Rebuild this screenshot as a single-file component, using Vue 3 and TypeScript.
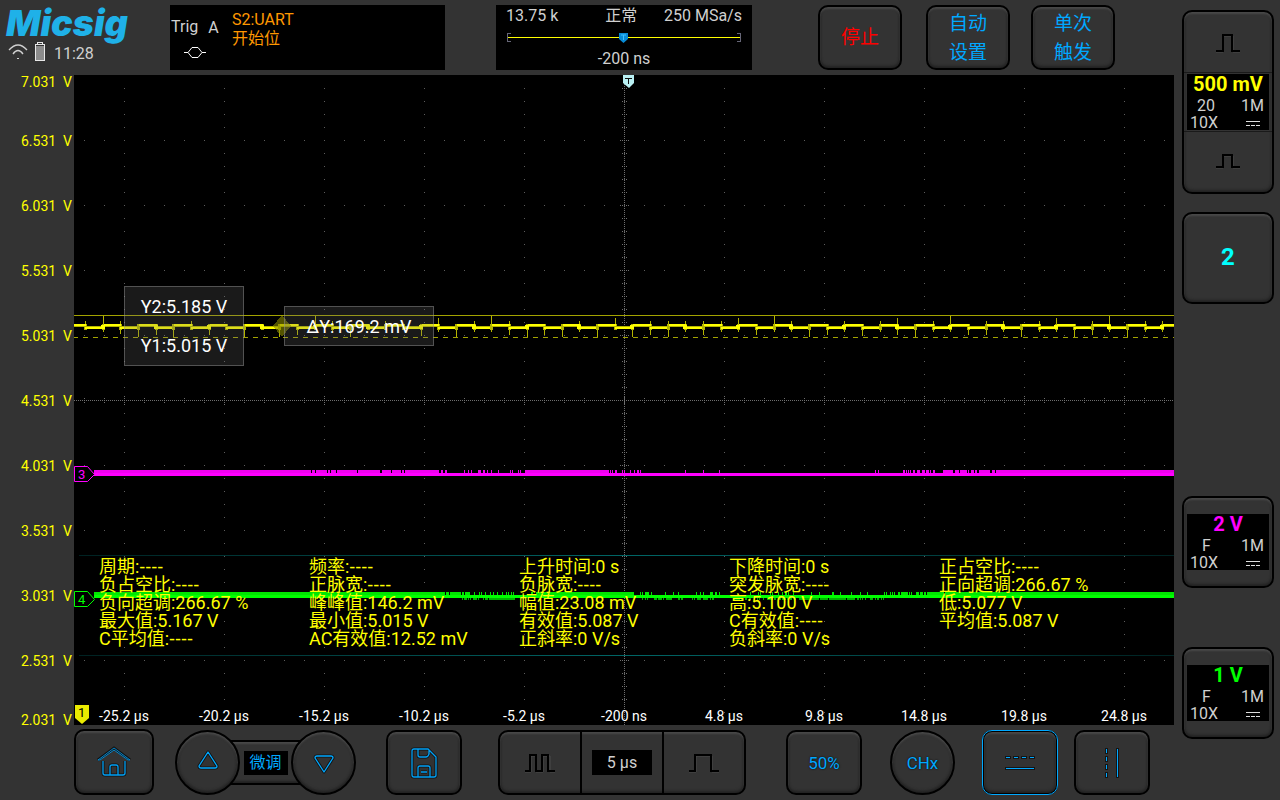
<script setup lang="ts">
interface Channel {
  id: string
  label: string
  scale: string
  band: string
  color: string
}

const channels: Channel[] = [
  { id: 'c3', label: '通道 3', scale: '2 V', band: 'F', color: 'magenta' },
  { id: 'c4', label: '通道 4', scale: '1 V', band: 'F', color: 'green' },
]

const volts = ['7.031', '6.531', '6.031', '5.531', '5.031', '4.531', '4.031', '3.531', '3.031', '2.531', '2.031']
const times = ['-25.2 µs', '-20.2 µs', '-15.2 µs', '-10.2 µs', '-5.2 µs', '-200 ns', '4.8 µs', '9.8 µs', '14.8 µs', '19.8 µs', '24.8 µs']

// A null value is shown as dashes
type Measure = [string, string | null]
const measures: Measure[][] = [
  [['周期', null], ['负占空比', null], ['负向超调', '266.67 %'], ['最大值', '5.167 V'], ['C平均值', null]],
  [['频率', null], ['正脉宽', null], ['峰峰值', '146.2 mV'], ['最小值', '5.015 V'], ['AC有效值', '12.52 mV']],
  [['上升时间', '0 s'], ['负脉宽', null], ['幅值', '23.08 mV'], ['有效值', '5.087 V'], ['正斜率', '0 V/s']],
  [['下降时间', '0 s'], ['突发脉宽', null], ['高', '5.100 V'], ['C有效值', null], ['负斜率', '0 V/s']],
  [['正占空比', null], ['正向超调', '266.67 %'], ['低', '5.077 V'], ['平均值', '5.087 V']],
]

const W = 1100
const H = 650
const box = (x: number, y: number, w = 1, h = 1): string => `M${x} ${y}h${w}v${h}h${-w}z`

// Graticule: dotted division lines plus denser centre axes with ticks
function graticule(): string {
  const d: string[] = []
  for (let x = 50; x < W; x += 100) {
    for (let y = 13; y < H; y += 13) d.push(box(x, y))
  }
  for (let y = 65; y < H; y += 65) {
    for (let x = 10; x < W; x += 20) d.push(box(x, y))
  }
  return d.join('')
}
function axes(): string {
  const d: string[] = []
  for (let x = 0; x < W; x += 2) d.push(box(x, 325))
  for (let y = 1; y < H; y += 2) d.push(box(550, y))
  for (let x = 10; x < W; x += 20) {
    d.push(box(x, 323), box(x, 327))
    if (x % 100 === 50) d.push(box(x, 321), box(x, 329))
  }
  for (let y = 13; y < H; y += 13) {
    d.push(box(548, y), box(552, y))
    if (y % 65 === 0) d.push(box(546, y), box(554, y))
  }
  d.push(box(550, 321, 1, 9))
  return d.join('')
}

// Channel 1: top and bottom of the spike at every edge
const spikes: [number, number][] = [
  [246, 255], [241, 257], [246, 259], [249, 262], [249, 260], [249, 262], [246, 255], [249, 260], [249, 255], [249, 262], [249, 254],
  [249, 262], [249, 260], [241, 255], [246, 257], [249, 262], [249, 255], [246, 255], [249, 255], [249, 261], [243, 257],
  [249, 262], [246, 257], [241, 257], [246, 260], [249, 262], [249, 260], [249, 262], [246, 257], [249, 262], [243, 255],
  [249, 262], [246, 260], [246, 262], [246, 257], [246, 260], [246, 257], [243, 257], [249, 260], [241, 257], [246, 257],
  [249, 262], [249, 260], [246, 257], [249, 261], [246, 257], [243, 260], [249, 262], [246, 257], [241, 257], [249, 260],
  [246, 260], [246, 257], [249, 262], [246, 257], [243, 257], [249, 262], [246, 260], [241, 257], [249, 262], [246, 257], [246, 257],
]
const edge = (k: number): number => Math.round(11 + k * 17.66)
function ch1Level(): string {
  const d: string[] = [box(0, 249, 12, 2)]
  spikes.forEach((_, k) => {
    const x = edge(k)
    const n = Math.min(edge(k + 1), W) - x
    if (k % 2 === 0) d.push(box(x, 252, n - 1, 2))
    else d.push(box(x + 1, 249, n, 2))
    if (k % 3 === 1) d.push(box(x - 2, 250, 4, 4))
  })
  return d.join('')
}
function ch1Glow(): string {
  const d: string[] = [box(0, 251, 12, 1)]
  spikes.forEach(([top, bottom], k) => {
    const x = edge(k)
    const n = Math.min(edge(k + 1), W) - x
    d.push(box(x, 251, n, 1), box(x, top, 1, bottom - top), box(x - 1, 249, 3, 6))
  })
  return d.join('')
}

// Noise fringe: [start, end, share of lit columns]
type Band = [number, number, number]
function fringe(bands: Band[], y: number, h: number): string {
  let seed = 7
  const d: string[] = []
  for (const [a, b, p] of bands) {
    if (p >= 1) {
      d.push(box(a, y, b - a, h))
      continue
    }
    for (let x = a; x < b; x++) {
      seed = (seed * 1103 + 12345) % 65537
      if (seed / 65537 < p) d.push(box(x, y, 1, h))
    }
  }
  return d.join('')
}
const grid = graticule()
const axis = axes()
const level1 = ch1Level()
const glow1 = ch1Glow()
const fringe3 = fringe([[20, 236, 1], [236, 300, 0.9], [300, 365, 0.85], [365, 375, 0.5], [375, 451, 0.25], [451, 535, 1], [535, 545, 0.5], [545, 575, 0.3], [575, 670, 0.05], [790, 830, 0.12], [830, 870, 0.5], [870, 925, 0.8], [925, 1100, 1]], 395, 3)
const fringe4 = fringe([[20, 370, 1], [370, 396, 0.9], [396, 462, 0.15], [462, 560, 1], [560, 576, 0.5], [576, 680, 0.1], [680, 720, 0.35], [720, 810, 0.1], [810, 840, 0.5], [840, 900, 0.85], [900, 1100, 1]], 517, 3)
const under4 = fringe([[388, 412, 0.4], [412, 441, 0.95], [568, 575, 0.4], [580, 640, 0.5], [660, 725, 0.5], [725, 780, 0.95], [780, 810, 0.4]], 523, 2)
</script>

<template>
  <div class="scope">
    <header class="top">
      <div class="brand">
        <h1 class="logo">Micsig</h1>
        <div class="status">
          <svg width="20" height="18" viewBox="0 0 20 18" fill="none" stroke="#d0d0d0" aria-hidden="true">
            <path d="M1 7 Q10 -3 19 7M5 11 Q10 4 15 11" stroke-width="1.3" />
            <path d="M9 15h2v1h-2z" fill="#d0d0d0" stroke="none" />
          </svg>
          <svg width="12" height="20" viewBox="0 0 12 20" shape-rendering="crispEdges" aria-hidden="true">
            <path d="M1 2h2V0h6v2h2v17H1z" fill="#e8e8e8" />
            <path d="M4 1h4v1H4zM2 3h8v15H2z" fill="#333" />
            <path d="M2 4h8v14H2z" fill="#8c8c8c" />
          </svg>
          <time>11:28</time>
        </div>
      </div>

      <section class="screen trig">
        <div class="trig-mode">
          <span>Trig</span><span class="src">A</span>
          <svg width="22" height="13" viewBox="0 0 22 13" fill="none" stroke="#fff" aria-hidden="true">
            <path d="M0 6.500h4l4-5h6l4 5h4M4 6.500l4 5h6l4-5" />
          </svg>
        </div>
        <div class="trig-info"><span>S2:UART</span><span>开始位</span></div>
      </section>

      <section class="screen acq">
        <div class="acq-row"><span>13.75 k</span><span class="mode">正常</span><span>250 MSa/s</span></div>
        <div class="track">
          <i class="bracket left"></i><i class="bar"></i><i class="bracket right"></i>
          <svg class="tmark" width="9" height="10" viewBox="0 0 9 10" aria-hidden="true">
            <path d="M0 0h9v6L4.500 10L0 6z" fill="#078bd6" />
            <path d="M2 2h5M4.500 2v5" stroke="#3dc0ff" />
          </svg>
        </div>
        <div class="delay">-200 ns</div>
      </section>

      <button class="key stop" type="button">停止</button>
      <button class="key auto" type="button">自动<br />设置</button>
      <button class="key single" type="button">单次<br />触发</button>
    </header>

    <div class="yaxis">
      <span v-for="v in volts" :key="v">{{ v }}&nbsp; V</span>
    </div>

    <main class="plot">
      <svg class="canvas" viewBox="0 0 1100 650" preserveAspectRatio="none" shape-rendering="crispEdges" role="img" aria-label="波形">
        <defs>
          <linearGradient id="teal" x1="0" x2="1" y1="0" y2="0">
            <stop offset="0" stop-color="#002222" />
            <stop offset="0.5" stop-color="#006666" />
            <stop offset="1" stop-color="#002222" />
          </linearGradient>
        </defs>
        <path :d="grid" fill="#5c5c5c" />
        <path :d="axis" fill="#6e6e6e" />
        <rect x="5" y="480" width="1095" height="1" fill="url(#teal)" />
        <rect x="5" y="580" width="1095" height="1" fill="url(#teal)" />

        <path :d="fringe4" fill="#00e600" />
        <path :d="under4" fill="#00b400" />
        <rect x="20" y="520" width="1080" height="3" fill="#00ff00" />
        <path :d="fringe3" fill="#f000f0" />
        <rect x="20" y="398" width="1080" height="3" fill="#ff00ff" />

        <rect x="0" y="240" width="1100" height="1" fill="#a3a300" />
        <path d="M0 262.500H1100" stroke="#a3a300" stroke-dasharray="5 5" stroke-dashoffset="1" />
        <path :d="glow1" fill="#b4b400" />
        <path :d="level1" fill="#ffff00" />
        <path d="M208 240l9 11l-9 11l-9 -11z" fill="#8c8c00" fill-opacity="0.6" />

        <g shape-rendering="auto">
          <path d="M.5 391.500h13l7 8l-7 7h-13z" fill="#000" stroke="#f0f" />
          <path d="M.5 516.500h13l7 8l-7 7h-13z" fill="#000" stroke="#0f0" />
          <path d="M1 630h14v13l-7 6l-7 -6z" fill="#ebeb00" />
          <path d="M549 0h11v8l-5 5l-6 -5z" fill="#b9f0f3" />
          <path d="M551 3.500h7M554.500 3v6" stroke="#111" />
          <text x="4" y="404" class="tag" fill="#f0f">3</text>
          <text x="4" y="529" class="tag" fill="#0f0">4</text>
          <text x="4" y="642" class="tag" fill="#000">1</text>
        </g>
      </svg>

      <output class="cursor-box y12"><span>Y2:5.185 V</span><span>Y1:5.015 V</span></output>
      <output class="cursor-box dy">ΔY:169.2 mV</output>

      <div class="measures">
        <ul v-for="(col, i) in measures" :key="i">
          <li v-for="[name, value] in col" :key="name">{{ name }}:<template v-if="value">{{ value }}</template><span v-else class="none">----</span></li>
        </ul>
      </div>

      <div class="xaxis">
        <span v-for="t in times" :key="t">{{ t }}</span>
      </div>
    </main>

    <aside class="side">
      <div class="key-frame tall">
        <button class="bare" type="button" aria-label="增大">
          <svg width="26" height="20" viewBox="0 0 26 20" fill="none" aria-hidden="true">
            <path d="M1 19h7V3h10v16h7" stroke="#4c4c4c" /><path d="M1 18h7V2h9v16h8" stroke="#000" stroke-width="2" />
          </svg>
        </button>
        <div class="ch-screen">
          <strong class="yellow">500 mV</strong>
          <div class="ch-row"><span class="bw">20</span><span>1M</span></div>
          <div class="ch-row"><span>10X</span>
            <svg width="14" height="6" viewBox="0 0 14 6" aria-hidden="true"><path d="M0 1h14v1h-14zM0 5h4v1h-4zM5 5h4v1h-4zM10 5h4v1h-4z" fill="#ddd" /></svg>
          </div>
        </div>
        <button class="bare" type="button" aria-label="减小">
          <svg width="26" height="16" viewBox="0 0 26 16" fill="none" aria-hidden="true">
            <path d="M1 15h7V3h10v12h7" stroke="#4c4c4c" /><path d="M1 14h7V2h9v12h8" stroke="#000" stroke-width="2" />
          </svg>
        </button>
      </div>
      <button class="key ch2" type="button">2</button>
      <button v-for="c in channels" :key="c.id" class="key ch" :class="c.id" type="button" :aria-label="c.label">
        <span class="ch-screen">
          <strong :class="c.color">{{ c.scale }}</strong>
          <span class="ch-row"><span class="f">{{ c.band }}</span><span>1M</span></span>
          <span class="ch-row"><span>10X</span>
            <svg width="14" height="6" viewBox="0 0 14 6" aria-hidden="true"><path d="M0 1h14v1h-14zM0 5h4v1h-4zM5 5h4v1h-4zM10 5h4v1h-4z" fill="#ddd" /></svg>
          </span>
        </span>
      </button>
    </aside>

    <footer class="bottom">
      <button class="key home" type="button" aria-label="主页">
        <svg width="34" height="32" viewBox="0 0 34 32" fill="none" aria-hidden="true">
          <g stroke="#111" stroke-width="3"><path d="M1 14L17 2L33 14M6 15v12q0 2 2 2h18q2 0 2-2V15M13 29V21q0-2 2-2h4q2 0 2 2v8" /></g>
          <path d="M1 14L17 2L33 14L31 14L17 4L3 14z" stroke="#00a0f5" stroke-width="0.800" />
          <path d="M6 15v12q0 2 2 2h18q2 0 2-2V15M13 29V21q0-2 2-2h4q2 0 2 2v8" stroke="#00a0f5" stroke-width="1.300" />
        </svg>
      </button>

      <div class="fine">
        <button class="key round up" type="button" aria-label="上调">
          <svg width="22" height="20" viewBox="0 0 22 20" fill="none" stroke-linejoin="round" aria-hidden="true">
            <path d="M11 2L20 16Q20 18 18 18H4Q2 18 2 16z" stroke="#111" stroke-width="3" />
            <path d="M11 2L20 16Q20 18 18 18H4Q2 18 2 16z" stroke="#00a8ff" stroke-width="1.300" />
          </svg>
        </button>
        <div class="link"><span>微调</span></div>
        <button class="key round down" type="button" aria-label="下调">
          <svg width="22" height="20" viewBox="0 0 22 20" fill="none" stroke-linejoin="round" aria-hidden="true">
            <path d="M11 18L20 4Q20 2 18 2H4Q2 2 2 4z" stroke="#111" stroke-width="3" />
            <path d="M11 18L20 4Q20 2 18 2H4Q2 2 2 4z" stroke="#00a8ff" stroke-width="1.300" />
          </svg>
        </button>
      </div>

      <button class="key save" type="button" aria-label="保存">
        <svg width="28" height="32" viewBox="0 0 28 32" fill="none" aria-hidden="true">
          <path d="M4 2h14l8 8v18q0 2-2 2H4q-2 0-2-2V4q0-2 2-2zM8 2v6q0 2 2 2h6q2 0 3-3M8 30V21q0-2 2-2h8q2 0 2 2v9M11 25h6" stroke="#111" stroke-width="3" />
          <path d="M4 2h14l8 8v18q0 2-2 2H4q-2 0-2-2V4q0-2 2-2zM8 2v6q0 2 2 2h6q2 0 3-3v-4M8 30V21q0-2 2-2h8q2 0 2 2v9M11 25h6" stroke="#00a0f5" stroke-width="1.300" />
        </svg>
      </button>

      <div class="timebase key-frame">
        <button class="bare" type="button" aria-label="减小时基">
          <svg width="32" height="20" viewBox="0 0 32 20" fill="none" aria-hidden="true">
            <path d="M1 19h6V3h5v16h7V3h7v16h5" stroke="#4c4c4c" /><path d="M1 18h5V2h6v16h6V2h6v16h7" stroke="#000" stroke-width="2" />
          </svg>
        </button>
        <div class="tb"><span>5 µs</span></div>
        <button class="bare" type="button" aria-label="增大时基">
          <svg width="32" height="20" viewBox="0 0 32 20" fill="none" aria-hidden="true">
            <path d="M1 19h7V3h16v16h7" stroke="#4c4c4c" /><path d="M1 18h6V2h16v16h8" stroke="#000" stroke-width="2" />
          </svg>
        </button>
      </div>

      <button class="key half" type="button">50%</button>
      <button class="key round chx" type="button">CHx</button>
      <button class="key hcur" type="button" aria-label="水平光标" aria-pressed="true">
        <svg width="32" height="16" viewBox="0 0 32 16" aria-hidden="true">
          <path d="M1 1h6v3h-6zM9 1h6v3h-6zM17 1h6v3h-6zM25 1h6v3h-6zM1 12h30v3h-30z" fill="#151515" />
          <path d="M2 2h4v1h-4zM10 2h4v1h-4zM18 2h4v1h-4zM26 2h4v1h-4zM2 13h28v1h-28z" fill="#00a8ff" />
        </svg>
      </button>
      <button class="key vcur" type="button" aria-label="垂直光标">
        <svg width="16" height="32" viewBox="0 0 16 32" aria-hidden="true">
          <path d="M1 1h3v6h-3zM1 9h3v6h-3zM1 17h3v6h-3zM1 25h3v6h-3zM12 1h3v30h-3z" fill="#151515" />
          <path d="M2 2h1v4h-1zM2 10h1v4h-1zM2 18h1v4h-1zM2 26h1v4h-1zM13 2h1v28h-1z" fill="#00a8ff" />
        </svg>
      </button>
    </footer>
  </div>
</template>

<style>
body {
  background: #333;
}
</style>

<style scoped>
* {
  box-sizing: border-box;
}
.scope {
  display: grid;
  grid-template-columns: 74px 1fr 106px;
  grid-template-rows: 75px 1fr 75px;
  min-height: 100vh;
  background: #333;
  color: #d0d0d0;
  font: 16px/20px Roboto, "Noto Sans CJK SC", sans-serif;
}
button {
  font: inherit;
  color: inherit;
  padding: 0;
  cursor: pointer;
}
.key,
.key-frame {
  display: flex;
  align-items: center;
  justify-content: center;
  background: #333;
  border: 2px solid #000;
  border-radius: 10px;
  box-shadow: inset 0 2px 2px #494949, inset 0 -2px 3px #222, inset 1px 0 2px #2a2a2a, inset -1px 0 2px #2a2a2a;
}
.bare {
  display: flex;
  align-items: center;
  justify-content: center;
  flex: 1;
  background: none;
  border: 0;
}

.top {
  grid-column: 1 / 3;
  display: grid;
  grid-template-columns: 170px 275px 51fr 256px 66fr 84px 24fr 84px 21fr 84px 59fr;
  padding: 5px 0;
}
.brand {
  padding-left: 6px;
}
.logo {
  margin: 0;
  height: 36px;
  color: #1fb1e8;
  font: italic 900 36px/36px Inter, sans-serif;
}
.status {
  display: flex;
  align-items: center;
  gap: 6px;
  padding-left: 2px;
  height: 22px;
}
.status time {
  margin-left: 2px;
  padding-top: 3px;
}
.screen {
  background: #000;
  height: 65px;
}
.trig {
  display: flex;
  padding-left: 1px;
}
.trig-mode {
  width: 61px;
  display: flex;
  flex-wrap: wrap;
  align-content: flex-start;
  column-gap: 10px;
  padding-top: 12px;
}
.trig-mode .src {
  padding-top: 1px;
}
.trig-mode svg {
  margin: 8px 0 0 13px;
}
.trig-info {
  display: flex;
  flex-direction: column;
  color: #ff9800;
  line-height: 19px;
  padding-top: 5px;
}
.acq {
  grid-column: 4;
  padding: 0 10px;
}
.acq-row {
  display: flex;
  justify-content: space-between;
  height: 22px;
  line-height: 22px;
}
.acq-row .mode {
  margin-left: 20px;
}
.track {
  position: relative;
  display: flex;
  align-items: center;
  height: 20px;
  padding: 0 1px;
}
.bracket {
  width: 4px;
  height: 9px;
  border: 1px solid #667;
}
.bracket.left {
  border-right: 0;
}
.bracket.right {
  border-left: 0;
}
.bar {
  flex: 1;
  height: 1px;
  margin: 0 -3px;
  background: #ff0;
}
.tmark {
  position: absolute;
  left: 113px;
  top: 6px;
}
.delay {
  text-align: center;
  line-height: 24px;
}
.stop {
  grid-column: 6;
  color: #f00;
  font-size: 19px;
}
.auto {
  grid-column: 8;
}
.single {
  grid-column: 10;
}
.auto,
.single {
  padding-top: 1px;
  color: #00a8ff;
  font-size: 19px;
  line-height: 29px;
}

.yaxis {
  grid-column: 1;
  grid-row: 2;
  display: grid;
  grid-template-rows: 1fr repeat(9, 2fr) 1fr;
  align-items: center;
  justify-items: end;
  margin: 1px 0 -1px;
  padding-right: 2px;
  color: #ff0;
  font-size: 14px;
  line-height: 14px;
}
.yaxis span:first-child,
.yaxis span:last-child {
  line-height: 12px;
}
.yaxis span:first-child {
  align-self: start;
}
.yaxis span:last-child {
  align-self: end;
}
.plot {
  grid-column: 2;
  grid-row: 2;
  position: relative;
  min-height: 650px;
  background: #000;
}
.canvas {
  position: absolute;
  width: 100%;
  height: 100%;
}
.tag {
  font: 13px Roboto, sans-serif;
}
.cursor-box {
  position: absolute;
  display: flex;
  flex-direction: column;
  align-items: center;
  justify-content: space-around;
  padding-top: 1px;
  background: rgba(110, 110, 110, 0.24);
  border: 1px solid rgba(150, 150, 150, 0.45);
  color: #fff;
  font-size: 18px;
}
.y12 {
  left: 50px;
  top: 211px;
  width: 120px;
  height: 80px;
}
.dy {
  left: 210px;
  top: 231px;
  width: 150px;
  height: 40px;
}
.measures {
  position: absolute;
  left: 0;
  right: 0;
  top: 483px;
  display: grid;
  grid-template-columns: repeat(5, 1fr);
  padding: 0 25px;
  color: #ff0;
  font-size: 18px;
  line-height: 18px;
  white-space: nowrap;
}
.measures ul {
  margin: 0;
  padding: 0;
  list-style: none;
}
.measures li {
  height: 18px;
}
.measures .none {
  font-family: "Liberation Sans", sans-serif;
}
.xaxis {
  position: absolute;
  left: 0;
  right: 0;
  bottom: 0;
  display: grid;
  grid-template-columns: repeat(11, 1fr);
  text-align: center;
  color: #fff;
  font-size: 14px;
  line-height: 18px;
}

.side {
  grid-column: 3;
  grid-row: 1 / 4;
  display: flex;
  flex-direction: column;
  padding: 10px 6px 61px 8px;
}
.tall {
  flex-direction: column;
  height: 184px;
}
.tall .bare {
  width: 100%;
  padding-bottom: 2px;
}
.tall .bare:first-child {
  flex: none;
  height: 61px;
  border-bottom: 1px solid #1a1a1a;
  padding: 2px 0 0;
}
.tall .bare:last-child {
  border-top: 1px solid #1a1a1a;
}
.tall .ch-screen {
  margin: 1px 0;
}
.ch2 {
  height: 92px;
  margin-top: 18px;
  padding-bottom: 2px;
  color: #0ff;
  font-size: 24px;
  font-weight: 700;
}
.ch {
  height: 92px;
}
.c3 {
  margin-top: auto;
}
.c4 {
  margin-top: 59px;
}
.ch-screen {
  display: flex;
  flex-direction: column;
  width: 82px;
  height: 56px;
  background: #000;
  line-height: 17px;
}
.ch-screen strong {
  margin-bottom: 3px;
  font-size: 20px;
  line-height: 20px;
  text-align: center;
}
.ch-row {
  display: flex;
  align-items: center;
  justify-content: space-between;
  height: 17px;
  flex: none;
  padding: 0 5px 0 3px;
}
.ch-row svg {
  margin-right: 4px;
}
.ch-row .bw {
  margin-left: 7px;
}
.ch-row .f {
  margin-left: 12px;
}
.yellow {
  color: #ff0;
}
.magenta {
  color: #f0f;
}
.green {
  color: #0f0;
}

.bottom {
  grid-column: 2;
  grid-row: 3;
  display: grid;
  grid-template-columns: 80px 21fr 181px 30fr 76px 36fr 248px 40fr 76px 28fr 65px 27fr 76px 16fr 76px 24fr;
  grid-template-rows: 65px;
  align-content: start;
  padding-top: 5px;
  color: #00a8ff;
}
.home {
  grid-column: 1;
  margin-top: -1px;
}
.fine {
  grid-column: 3;
  display: flex;
  align-items: center;
}
.round {
  width: 65px;
  height: 65px;
  flex: none;
  border-radius: 50%;
  z-index: 1;
}
.up {
  padding-bottom: 5px;
}
.down {
  padding-top: 3px;
}
.link {
  flex: 1;
  display: flex;
  align-items: center;
  justify-content: center;
  height: 45px;
  margin: 0 -9px;
  border: solid #000;
  border-width: 2px 0;
  box-shadow: inset 0 2px 2px #494949, inset 0 -2px 2px #222;
}
.link span {
  width: 44px;
  height: 24px;
  line-height: 24px;
  background: #000;
  text-align: center;
}
.save {
  grid-column: 5;
}
.timebase {
  grid-column: 7;
  align-items: stretch;
}
.tb {
  width: 84px;
  display: flex;
  align-items: center;
  justify-content: center;
  border: solid #000;
  border-width: 0 2px;
}
.tb span {
  width: 60px;
  height: 25px;
  line-height: 25px;
  background: #000;
  color: #d0d0d0;
  text-align: center;
}
.half,
.chx {
  font-size: 17px;
  text-shadow: 0 0 2px #000;
}
.half {
  grid-column: 9;
}
.chx {
  grid-column: 11;
}
.hcur {
  grid-column: 13;
  outline: 1px solid #00a8ff;
  outline-offset: -1px;
}
.vcur {
  grid-column: 15;
}
</style>
